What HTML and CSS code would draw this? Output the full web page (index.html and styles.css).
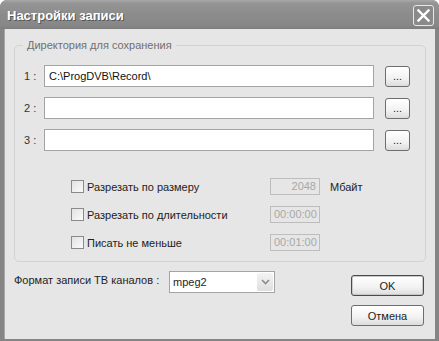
FILE: index.html
```html
<!DOCTYPE html>
<html lang="ru">
<head>
    <meta charset="UTF-8">
    <title>Настройки записи</title>
    <link rel="stylesheet" href="styles.css">
</head>
<body>

<div class="window">
    <div class="titlebar">
        <span class="title">Настройки записи</span>
        <span class="close">
            <svg width="15" height="15" viewBox="0 0 15 15">
                <path d="M2.5 2.5 L12.5 12.5 M12.5 2.5 L2.5 12.5" stroke="#fff" stroke-width="2.4" stroke-linecap="square"/>
            </svg>
        </span>
    </div>

    <div class="client">
        <fieldset class="group">
            <legend>Директория для сохранения</legend>

            <div class="dirs">
                <label>1 :</label>
                <div class="field">C:\ProgDVB\Record\</div>
                <button class="btn small">...</button>

                <label>2 :</label>
                <div class="field"></div>
                <button class="btn small">...</button>

                <label>3 :</label>
                <div class="field"></div>
                <button class="btn small">...</button>
            </div>

            <div class="options">
                <div class="check"><span class="box"></span>Разрезать по размеру</div>
                <div class="value right">2048</div>
                <div class="unit">Мбайт</div>

                <div class="check"><span class="box"></span>Разрезать по длительности</div>
                <div class="value">00:00:00</div>
                <div class="unit"></div>

                <div class="check"><span class="box"></span>Писать не меньше</div>
                <div class="value">00:01:00</div>
                <div class="unit"></div>
            </div>
        </fieldset>

        <div class="bottom">
            <div class="format">
                <span class="format-label">Формат записи ТВ каналов :</span>
                <div class="select">
                    <span class="select-text">mpeg2</span>
                    <span class="arrow">
                        <svg width="9" height="6" viewBox="0 0 9 6">
                            <path d="M1 1 L4.5 4.5 L8 1" fill="none" stroke="#8c8c8c" stroke-width="1.6"/>
                        </svg>
                    </span>
                </div>
            </div>
            <div class="actions">
                <button class="btn wide default">OK</button>
                <button class="btn wide">Отмена</button>
            </div>
        </div>
    </div>
</div>

</body>
</html>
```

FILE: styles.css
```css
body {
    margin: 0;
    background: #fff;
    font-family: "Liberation Sans", Arial, sans-serif;
    font-size: 11px;
    color: #1e1e1e;
}
.window {
    width: 439px;
    height: 341px;
    display: flex;
    flex-direction: column;
    background: #858585;
    border-radius: 7px 7px 0 0;
    overflow: hidden;
}
.titlebar {
    height: 29px;
    flex: none;
    display: flex;
    align-items: center;
    justify-content: space-between;
    padding: 0 5px 0 7px;
    background: linear-gradient(#a9a9a9 0, #959595 3px, #8c8c8c 14px, #878787 26px, #7c7c7c 29px);
}
.title {
    color: #fff;
    font-weight: bold;
    font-size: 13px;
    text-shadow: 1px 1px 0 #555;
    margin-top: 2px;
}
.close {
    width: 19px;
    height: 19px;
    border: 1px solid #e8e8e8;
    border-radius: 3px;
    background: #8a8a8a;
    display: flex;
    align-items: center;
    justify-content: center;
    margin-top: 1px;
}
.client {
    flex: 1;
    background: #e6e6e6;
    margin: 0 4px 2px 4px;
    box-shadow: inset 1px 0 0 #a8a8a8;
    display: flex;
    flex-direction: column;
}
.group {
    margin: 9px 9px 0 10px;
    padding: 13px 15px 10px 9px;
    border: 1px solid #d2d2d2;
    border-radius: 5px;
}
.group legend {
    margin-left: -1px;
    padding: 0 4px;
    line-height: 14px;
    color: #707070;
}
.dirs {
    display: grid;
    grid-template-columns: 20px 330px 36px;
    grid-auto-rows: 22px;
    row-gap: 10px;
    align-items: center;
}
.dirs label {
    color: #333;
}
.dirs .btn {
    justify-self: end;
}
.field {
    height: 22px;
    box-sizing: border-box;
    border: 1px solid #a4a4a4;
    background: #fff;
    padding: 0 4px;
    line-height: 20px;
    color: #111;
}
.btn {
    font-family: inherit;
    font-size: 11px;
    color: #1e1e1e;
    border: 1px solid #6e6e6e;
    border-radius: 3px;
    background: linear-gradient(#ffffff, #f2f2f2 60%, #dcdcdc);
    padding: 0;
    box-sizing: border-box;
}
.btn.small {
    width: 25px;
    height: 21px;
    line-height: 15px;
}
.options {
    display: grid;
    grid-template-columns: 189px 50px auto;
    grid-auto-rows: 17px;
    column-gap: 10px;
    row-gap: 11px;
    align-items: center;
    margin: 27px 0 0 47px;
}
.check {
    display: flex;
    align-items: center;
    gap: 3px;
    color: #222;
}
.box {
    width: 11px;
    height: 11px;
    border: 1px solid #8a8a8a;
    background: linear-gradient(135deg, #e2e2e2, #fafafa);
}
.value {
    height: 17px;
    box-sizing: border-box;
    border: 1px solid #bdbdbd;
    padding: 0 3px;
    line-height: 15px;
    color: #a8a8a8;
    white-space: nowrap;
    overflow: hidden;
}
.value.right {
    text-align: right;
}
.unit {
    color: #222;
}
.bottom {
    display: flex;
    justify-content: space-between;
    margin: 9px 11px 0 10px;
}
.format {
    display: flex;
    align-items: flex-start;
}
.format-label {
    margin-top: 3px;
    width: 155px;
}
.select {
    width: 106px;
    height: 22px;
    box-sizing: border-box;
    border: 1px solid #a4a4a4;
    background: #fff;
    display: flex;
    align-items: center;
    justify-content: space-between;
    padding-left: 3px;
}
.arrow {
    width: 16px;
    height: 18px;
    margin-right: 1px;
    background: linear-gradient(#f4f4f4, #dedede);
    border-radius: 2px;
    display: flex;
    align-items: center;
    justify-content: center;
}
.actions {
    display: flex;
    flex-direction: column;
    gap: 9px;
    margin-top: 4px;
}
.btn.wide {
    width: 73px;
    height: 21px;
}
.btn.default {
    border-color: #4a4a4a;
    box-shadow: inset 0 0 0 1px #c8c8c8;
}
```
